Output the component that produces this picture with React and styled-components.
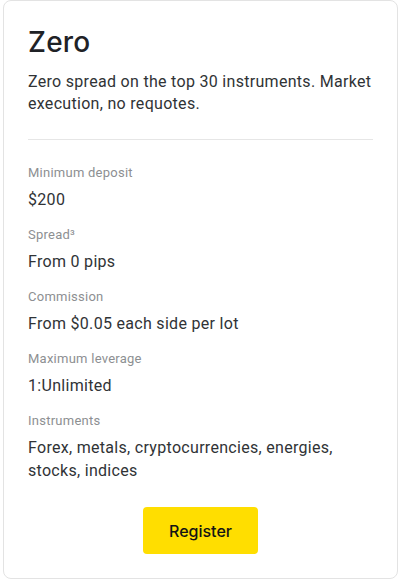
import React from "react";
import styled, { createGlobalStyle } from "styled-components";

const GlobalStyle = createGlobalStyle`
  body {
    margin: 0;
    background: #ffffff;
    font-family: Roboto, "Noto Sans", sans-serif;
    color: #1f2226;
  }
`;

const Card = styled.div`
  box-sizing: border-box;
  margin: 0 0 0 3px;
  width: 395px;
  height: 579px;
  border: 1px solid #e3e3e3;
  border-radius: 8px;
  padding: 24px 24px 0 24px;
  display: flex;
  flex-direction: column;
`;

const Title = styled.h2`
  margin: 0;
  font-family: Inter, Roboto, sans-serif;
  font-size: 28px;
  line-height: 34px;
  font-weight: 500;
  letter-spacing: 0.2px;
`;

const Description = styled.p`
  margin: 12px 0 0 0;
  font-size: 16px;
  line-height: 22px;
  letter-spacing: 0.3px;
  color: #303336;
`;

const Divider = styled.hr`
  margin: 24px 0 0 0;
  border: none;
  border-top: 1px solid #e6e6e6;
`;

const Specs = styled.dl`
  margin: 24px 0 0 0;
  display: flex;
  flex-direction: column;
  gap: 15px;
`;

const Spec = styled.div`
  display: flex;
  flex-direction: column;
  gap: 6px;
`;

const Label = styled.dt`
  font-size: 13px;
  line-height: 18px;
  letter-spacing: 0.25px;
  color: #8d8f92;
`;

const Value = styled.dd`
  margin: 0;
  font-size: 16px;
  line-height: 23px;
  letter-spacing: 0.3px;
  color: #303336;
`;

const Actions = styled.div`
  margin-top: 25px;
  display: flex;
  justify-content: center;
`;

const Button = styled.button`
  width: 115px;
  height: 47px;
  border: none;
  border-radius: 4px;
  background: #ffde00;
  color: #141414;
  font-family: Inter, Roboto, sans-serif;
  font-size: 16px;
  font-weight: 500;
  cursor: pointer;
`;

const specs = [
  { label: "Minimum deposit", value: "$200" },
  { label: "Spread³", value: "From 0 pips" },
  { label: "Commission", value: "From $0.05 each side per lot" },
  { label: "Maximum leverage", value: "1:Unlimited" },
  { label: "Instruments", value: "Forex, metals, cryptocurrencies, energies, stocks, indices" },
];

export default function App() {
  return (
    <>
      <GlobalStyle />
      <Card>
        <Title>Zero</Title>
        <Description>
          Zero spread on the top 30 instruments. Market execution, no requotes.
        </Description>
        <Divider />
        <Specs>
          {specs.map((s) => (
            <Spec key={s.label}>
              <Label>{s.label}</Label>
              <Value>{s.value}</Value>
            </Spec>
          ))}
        </Specs>
        <Actions>
          <Button>Register</Button>
        </Actions>
      </Card>
    </>
  );
}
